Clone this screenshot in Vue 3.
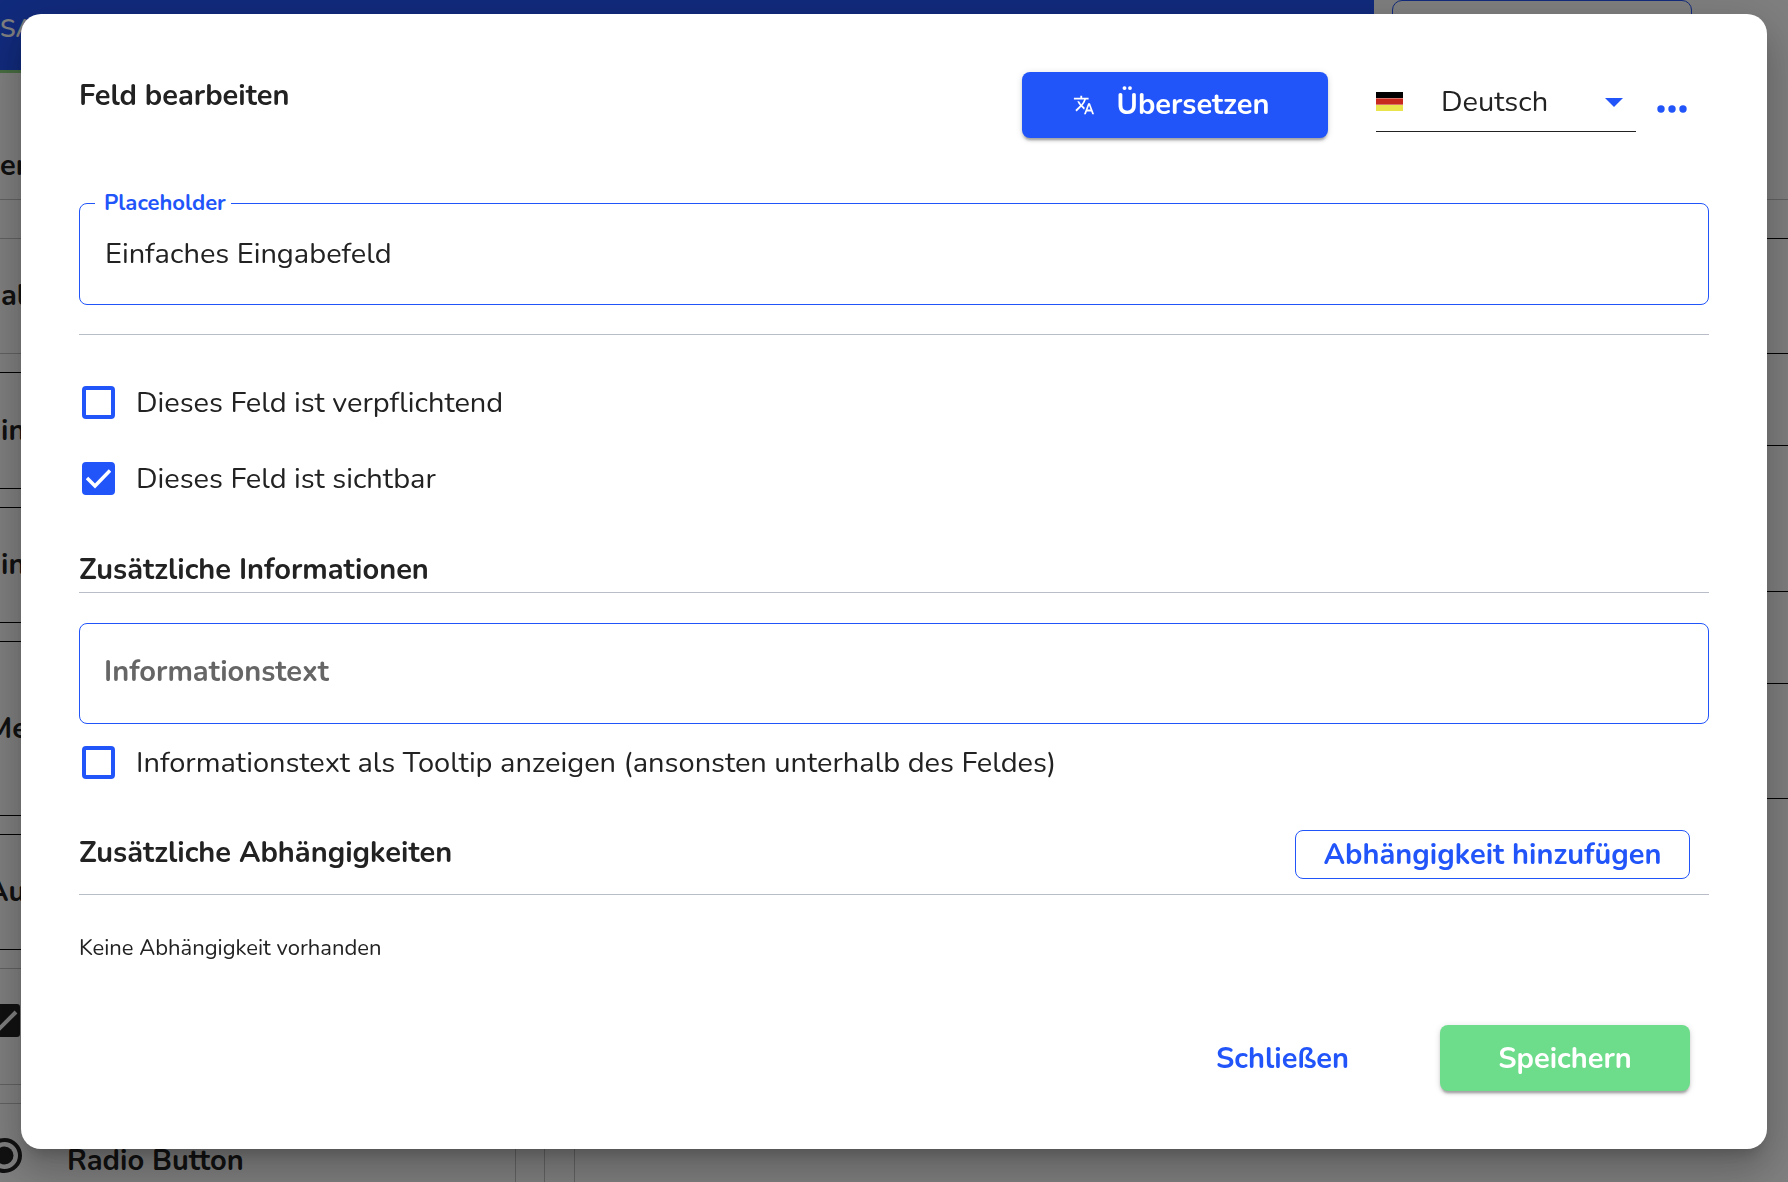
<script setup>
import { ref } from 'vue'

const language = ref('Deutsch')
const placeholder = ref('Einfaches Eingabefeld')
const infoText = ref('')
const required = ref(false)
const visible = ref(true)
const asTooltip = ref(false)

const palette = [
  { label: 'al', kind: 'plain' },
  { label: 'in', kind: 'plain outlined' },
  { label: 'in', kind: 'plain outlined' },
  { label: 'Me', kind: 'cut outlined tall' },
  { label: 'Au', kind: 'cut outlined' },
  { label: '', kind: 'cut', icon: 'check' },
  { label: 'Radio Button', kind: 'cut', icon: 'radio' },
]
</script>

<template>
  <div class="page">
    <div class="topbar">
      <nav class="nav">SA</nav>
      <div class="account">
        <svg width="24" height="24" viewBox="0 0 24 24"><circle cx="12" cy="12" r="12" /></svg>
      </div>
    </div>
    <div class="heading">er</div>
    <div class="columns">
      <div class="palette">
        <div v-for="(item, i) in palette" :key="i" class="card" :class="item.kind">
          <svg v-if="item.icon === 'check'" width="33" height="33" viewBox="0 0 33 33">
            <rect width="33" height="33" rx="3" fill="#222" />
            <path d="M4 15l9 9L29 8" fill="none" stroke="#fff" stroke-width="4" />
          </svg>
          <svg v-if="item.icon === 'radio'" width="35" height="35" viewBox="0 0 35 35">
            <circle cx="17.5" cy="17.5" r="15.5" fill="none" stroke="#222" stroke-width="4" />
            <circle cx="17.5" cy="17.5" r="9" fill="#222" />
          </svg>
          <span>{{ item.label }}</span>
        </div>
      </div>
      <div class="gutter"></div>
      <div class="canvas">
        <div class="slot"></div>
        <div class="slot large"></div>
        <div class="slot"></div>
      </div>
    </div>
  </div>

  <div class="overlay">
    <form class="dialog" role="dialog" aria-labelledby="dialog-title" @submit.prevent>
      <header class="dialog-header">
        <h2 id="dialog-title">Feld bearbeiten</h2>
        <button type="button" class="btn primary translate">
          <svg width="22" height="22" viewBox="0 0 24 24" fill="currentColor" aria-hidden="true">
            <path d="M12.87 15.07l-2.54-2.51.03-.03c1.74-1.94 2.98-4.17 3.71-6.53H17V4h-7V2H8v2H1v1.99h11.17C11.5 7.92 10.44 9.75 9 11.35 8.07 10.32 7.3 9.19 6.69 8h-2c.73 1.63 1.73 3.17 2.98 4.56l-5.09 5.02L4 19l5-5 3.11 3.11.76-2.04zM18.5 10h-2L12 22h2l1.12-3h4.75L21 22h2l-4.5-12zm-2.62 7l1.62-4.33L19.12 17h-3.24z" />
          </svg>
          <span>Übersetzen</span>
        </button>
        <div class="language">
          <svg class="flag" width="27" height="19" viewBox="0 0 27 19" aria-hidden="true">
            <rect width="27" height="6" fill="#000" />
            <rect y="6" width="27" height="7" fill="#c8291f" />
            <rect y="13" width="27" height="6" fill="#e9e34c" />
            <path d="M0 6.5h27M0 12.5h27" stroke="#fff" stroke-opacity=".35" />
          </svg>
          <select v-model="language" aria-label="Sprache">
            <option>Deutsch</option>
          </select>
          <svg class="arrow" width="18" height="9" viewBox="0 0 18 9" aria-hidden="true">
            <path d="M0 0h18L9 9z" fill="#2255f9" />
          </svg>
        </div>
        <button type="button" class="more" aria-label="Mehr">
          <svg width="30" height="8" viewBox="0 0 30 8" fill="currentColor" aria-hidden="true">
            <circle cx="4" cy="4" r="3.7" /><circle cx="15" cy="4" r="3.7" /><circle cx="26" cy="4" r="3.7" />
          </svg>
        </button>
      </header>

      <div class="field first">
        <label for="placeholder">Placeholder</label>
        <input id="placeholder" v-model="placeholder" type="text" />
      </div>

      <div class="options">
        <label class="check"><input v-model="required" type="checkbox" />Dieses Feld ist verpflichtend</label>
        <label class="check"><input v-model="visible" type="checkbox" />Dieses Feld ist sichtbar</label>
      </div>

      <h3 class="section">Zusätzliche Informationen</h3>
      <div class="field info">
        <input v-model="infoText" type="text" placeholder="Informationstext" aria-label="Informationstext" />
      </div>
      <label class="check tooltip-check"><input v-model="asTooltip" type="checkbox" />Informationstext als Tooltip anzeigen (ansonsten unterhalb des Feldes)</label>

      <div class="dependencies">
        <h3>Zusätzliche Abhängigkeiten</h3>
        <button type="button" class="btn outline">Abhängigkeit hinzufügen</button>
      </div>
      <p class="empty">Keine Abhängigkeit vorhanden</p>

      <footer class="actions">
        <button type="button" class="btn text">Schließen</button>
        <button type="submit" class="btn save">Speichern</button>
      </footer>
    </form>
  </div>
</template>

<style>
body {
  margin: 0;
  overflow: hidden;
}
</style>

<style scoped>
.page,
.dialog,
.dialog button,
.dialog input,
.dialog select {
  font-family: Nunito, "Open Sans", "Noto Sans", sans-serif;
  font-size: 29px;
  line-height: 42px;
  color: #222;
}
* {
  box-sizing: border-box;
}

/* Form builder behind the dialog */
.page {
  height: 100vh;
  overflow: hidden;
  background: #fff;
  font-weight: 700;
}
.topbar {
  display: flex;
  gap: 18px;
  padding-right: 96px;
}
.nav {
  flex: 1;
  height: 73px;
  padding-top: 8px;
  border-bottom: 3px solid #8fda84;
  background: #2255f9;
  color: #fff;
  font-size: 25px;
  font-weight: 600;
}
.account {
  width: 300px;
  height: 60px;
  padding: 11px 28px;
  border: 1px solid #2255f9;
  border-radius: 10px;
  fill: #2255f9;
}
.heading {
  height: 127px;
  padding-top: 72px;
  border-bottom: 1px solid #c4c4c4;
}
.columns {
  display: flex;
  padding-top: 38px;
}
.palette {
  display: flex;
  flex-direction: column;
  gap: 18px;
  width: 546px;
  margin-left: -30px;
}
.card {
  display: flex;
  align-items: center;
  gap: 45px;
  height: 116px;
  border: 1px solid #c4c4c4;
}
.card:nth-child(4n + 2) {
  height: 117px;
}
.card.outlined {
  border-color: #000;
}
.card.tall {
  height: 175px;
}
.card.plain {
  padding-left: 30px;
}
.card.cut {
  padding-left: 16px;
}
.card svg {
  margin-bottom: 12px;
}
.gutter {
  width: 29px;
  border-right: 1px solid #c4c4c4;
}
.canvas {
  flex: 1;
  display: flex;
  flex-direction: column;
  gap: 91px;
  margin-left: 29px;
  border-left: 1px solid #c4c4c4;
}
.slot {
  height: 116px;
  border: 1px solid #000;
  border-width: 1px 0;
}
.slot.large {
  height: 147px;
}

/* Dialog */
.overlay {
  position: fixed;
  inset: 0;
  padding: 14px 21px;
  background: rgba(0, 0, 0, 0.5);
}
.dialog {
  padding: 58px;
  border-radius: 20px;
  background: #fff;
  box-shadow:
    0 11px 15px -7px rgba(0, 0, 0, 0.2),
    0 24px 38px 3px rgba(0, 0, 0, 0.14),
    0 9px 46px 8px rgba(0, 0, 0, 0.12);
}
h2,
h3,
p {
  margin: 0;
}
h2,
h3 {
  font-size: 29px;
  font-weight: 700;
}
.dialog-header {
  display: flex;
  padding-right: 19px;
}
.dialog-header h2 {
  flex: 1;
  padding-top: 3px;
}
.btn {
  height: 66px;
  padding: 0;
  border: 0;
  border-radius: 8px;
  background: none;
}
.dialog .btn {
  font-weight: 700;
}
.primary,
.save {
  box-shadow:
    0 4px 2px -2px rgba(0, 0, 0, 0.2),
    0 3px 3px rgba(0, 0, 0, 0.14),
    0 1px 7px rgba(0, 0, 0, 0.12);
}
.dialog .primary,
.dialog .save {
  color: #fff;
}
.primary {
  background: #2255f9;
}
.translate {
  display: flex;
  align-items: center;
  justify-content: center;
  gap: 22px;
  width: 306px;
  padding-right: 8px;
}
.language {
  position: relative;
  width: 260px;
  height: 60px;
  margin-left: 48px;
}
.language select {
  width: 100%;
  height: 100%;
  padding: 0 40px 0 65px;
  appearance: none;
  border: 0;
  border-bottom: 1px solid #222;
  background: none;
}
.flag {
  position: absolute;
  top: 20px;
  left: 0;
}
.arrow {
  position: absolute;
  top: 26px;
  right: 13px;
}
.more {
  display: flex;
  align-items: center;
  justify-content: center;
  width: 36px;
  height: 36px;
  margin: 19px 0 0 18px;
  padding: 0;
  border: 0;
  background: none;
}
.dialog .more,
.dialog .outline,
.dialog .text {
  color: #2255f9;
}
.field {
  position: relative;
  border: 1px solid #2255f9;
  border-radius: 8px;
}
.field.first {
  margin-top: 65px;
}
.field label {
  position: absolute;
  top: -16px;
  left: 15px;
  padding: 0 5px 0 9px;
  background: #fff;
  color: #2255f9;
  font-size: 22px;
  font-weight: 700;
  line-height: 30px;
}
.field input {
  display: block;
  width: 100%;
  height: 100px;
  padding: 0 25px 2px;
  border: 0;
  border-radius: 8px;
  background: none;
}
.info input {
  height: 99px;
  padding: 0 24px 4px;
}
.field input::placeholder {
  color: #666;
  font-weight: 700;
  opacity: 1;
}
.options {
  display: flex;
  flex-direction: column;
  gap: 34px;
  margin-top: 29px;
  padding-top: 47px;
  border-top: 1px solid #b9bdc8;
}
.check {
  display: flex;
  align-items: center;
  gap: 21px;
}
.check input {
  width: 33px;
  height: 33px;
  margin: 0 0 2px 3px;
  appearance: none;
  border: 4px solid #2255f9;
  border-radius: 4px;
}
.check input:checked {
  background: #2255f9
    url("data:image/svg+xml,%3Csvg xmlns='http://www.w3.org/2000/svg' viewBox='0 0 25 25'%3E%3Cpath d='M1 12l8 8L24 4.5' fill='none' stroke='%23fff' stroke-width='3.5'/%3E%3C/svg%3E")
    center / 25px no-repeat;
}
.section {
  margin-top: 49px;
  padding-bottom: 1px;
  border-bottom: 1px solid #b9bdc8;
}
.info {
  margin-top: 30px;
}
.tooltip-check {
  margin-top: 18px;
}
.dependencies {
  display: flex;
  justify-content: space-between;
  margin-top: 46px;
  padding: 0 19px 15px 0;
  border-bottom: 1px solid #b9bdc8;
}
.dependencies h3 {
  padding-top: 2px;
}
.outline {
  width: 395px;
  height: 49px;
  border: 1px solid #2255f9;
}
.empty {
  margin-top: 38px;
  font-size: 22px;
  line-height: 30px;
}
.actions {
  display: flex;
  justify-content: flex-end;
  gap: 16px;
  margin-top: 62px;
  padding-right: 19px;
}
.text {
  padding: 2px 75px 0;
}
.save {
  width: 250px;
  padding-top: 2px;
  background: #6ddd8b;
}
</style>
